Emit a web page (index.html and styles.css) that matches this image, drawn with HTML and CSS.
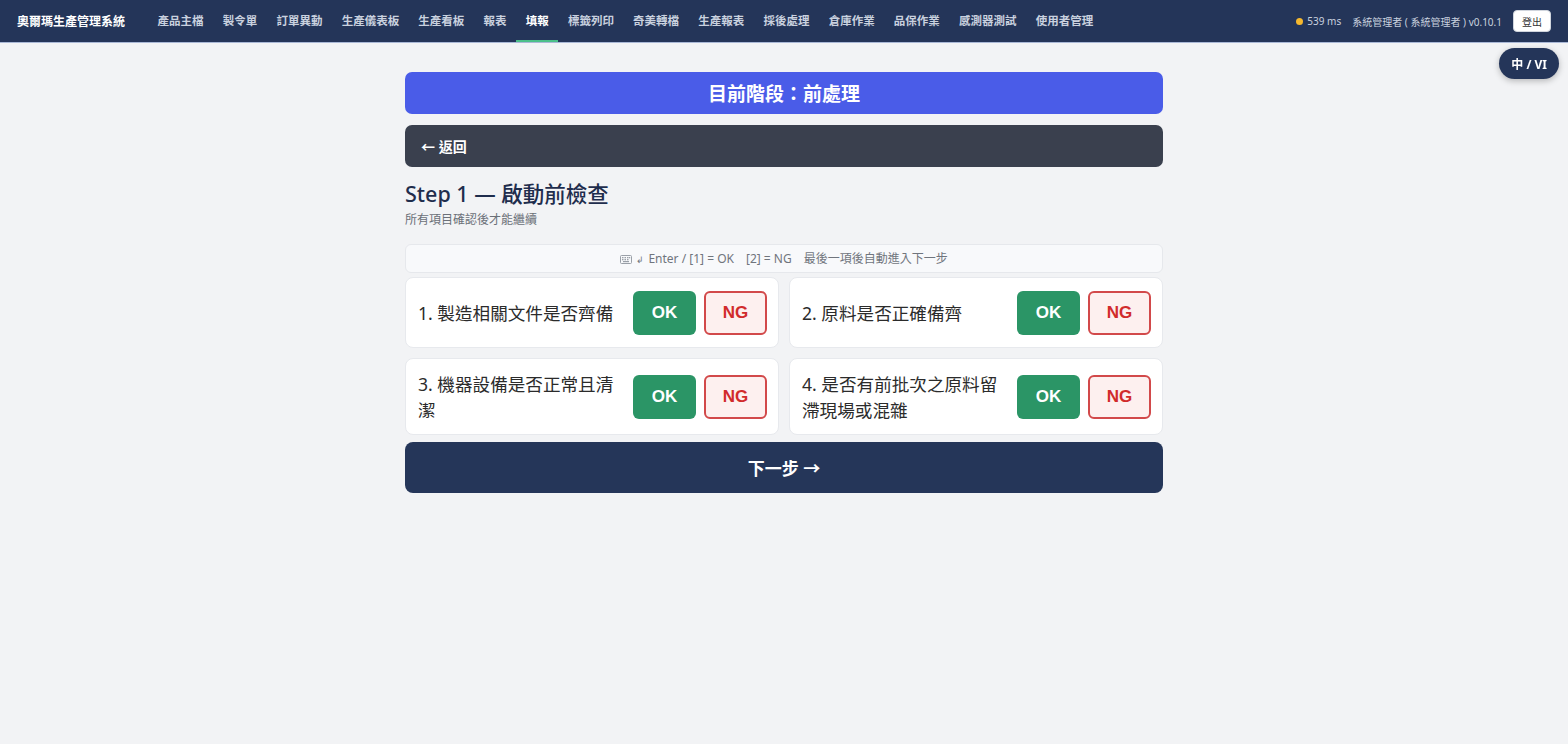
FILE: index.html
```html
<!DOCTYPE html>
<html lang="zh-Hant">
<head>
    <meta charset="UTF-8">
    <meta name="viewport" content="width=device-width, initial-scale=1.0">
    <title>奧爾瑪生產管理系統 - 填報</title>
    <link rel="stylesheet" href="styles.css">
</head>
<body>
    <!-- Top Navigation -->
    <header class="topbar">
        <div class="brand">奧爾瑪生產管理系統</div>
        <nav class="nav">
            <a href="#">產品主檔</a>
            <a href="#">製令單</a>
            <a href="#">訂單異動</a>
            <a href="#">生產儀表板</a>
            <a href="#">生產看板</a>
            <a href="#">報表</a>
            <a href="#" class="active">填報</a>
            <a href="#">標籤列印</a>
            <a href="#">奇美轉檔</a>
            <a href="#">生產報表</a>
            <a href="#">採後處理</a>
            <a href="#">倉庫作業</a>
            <a href="#">品保作業</a>
            <a href="#">感測器測試</a>
            <a href="#">使用者管理</a>
        </nav>
        <div class="status">
            <span class="dot"></span>
            <span class="latency">539 ms</span>
            <span class="user">系統管理者 ( 系統管理者 ) v0.10.1</span>
            <button class="logout">登出</button>
        </div>
    </header>

    <button class="lang-toggle">中 / VI</button>

    <!-- Main Content -->
    <main class="container">
        <div class="stage-banner">目前階段：前處理</div>
        <button class="back-bar">← 返回</button>

        <h2 class="step-title">Step 1 — 啟動前檢查</h2>
        <p class="step-sub">所有項目確認後才能繼續</p>

        <div class="hint">
            <svg class="kbd-icon" width="12" height="9" viewBox="0 0 12 9">
                <rect x="0.5" y="0.5" width="11" height="8" rx="1" fill="none" stroke="#9aa0a8"/>
                <rect x="2" y="2" width="1.5" height="1.3" fill="#9aa0a8"/>
                <rect x="4.5" y="2" width="1.5" height="1.3" fill="#9aa0a8"/>
                <rect x="7" y="2" width="1.5" height="1.3" fill="#9aa0a8"/>
                <rect x="9" y="2" width="1.2" height="1.3" fill="#9aa0a8"/>
                <rect x="2" y="4" width="1.5" height="1.3" fill="#9aa0a8"/>
                <rect x="4.5" y="4" width="1.5" height="1.3" fill="#9aa0a8"/>
                <rect x="7" y="4" width="1.5" height="1.3" fill="#9aa0a8"/>
                <rect x="3" y="6" width="6" height="1.2" fill="#9aa0a8"/>
            </svg><span class="enter">↲</span> Enter / [1] = OK<span class="sp"></span>[2] = NG<span class="sp"></span>最後一項後自動進入下一步
        </div>

        <div class="checklist">
            <div class="check-card">
                <div class="check-text">1. 製造相關文件是否齊備</div>
                <div class="check-btns">
                    <button class="btn-ok">OK</button>
                    <button class="btn-ng">NG</button>
                </div>
            </div>
            <div class="check-card">
                <div class="check-text">2. 原料是否正確備齊</div>
                <div class="check-btns">
                    <button class="btn-ok">OK</button>
                    <button class="btn-ng">NG</button>
                </div>
            </div>
            <div class="check-card">
                <div class="check-text">3. 機器設備是否正常且清潔</div>
                <div class="check-btns">
                    <button class="btn-ok">OK</button>
                    <button class="btn-ng">NG</button>
                </div>
            </div>
            <div class="check-card">
                <div class="check-text">4. 是否有前批次之原料留滯現場或混雜</div>
                <div class="check-btns">
                    <button class="btn-ok">OK</button>
                    <button class="btn-ng">NG</button>
                </div>
            </div>
        </div>

        <button class="next-btn">下一步 →</button>
    </main>
</body>
</html>
```

FILE: styles.css
```css
* {
    margin: 0;
    padding: 0;
    box-sizing: border-box;
}

body {
    font-family: "Noto Sans", "Noto Sans CJK TC", sans-serif;
    background-color: #f2f3f5;
    color: #2b2b2b;
}

button {
    font-family: inherit;
    cursor: pointer;
}

/* Header */
.topbar {
    height: 43px;
    background-color: #243559;
    border-bottom: 1px solid #aab8d6;
    display: flex;
    align-items: center;
    padding: 0 17px;
}

.brand {
    color: #ffffff;
    font-weight: 700;
    font-size: 12px;
    margin-right: 23px;
}

.nav {
    display: flex;
    height: 100%;
}

.nav a {
    display: flex;
    align-items: center;
    padding: 0 9.6px;
    color: #c9d1df;
    text-decoration: none;
    font-size: 11.5px;
    font-weight: 700;
    border-bottom: 2px solid transparent;
}

.nav a.active {
    color: #ffffff;
    border-bottom-color: #4cc08a;
}

.status {
    margin-left: auto;
    display: flex;
    align-items: center;
    color: #c9d1df;
    font-size: 10px;
}

.dot {
    width: 7px;
    height: 7px;
    border-radius: 50%;
    background-color: #f5b82e;
    margin-right: 4px;
}

.latency {
    margin-right: 11px;
}

.logout {
    margin-left: 11px;
    height: 22px;
    background: #ffffff;
    color: #333;
    border: 1px solid #d0d5dd;
    border-radius: 4px;
    font-size: 10px;
    padding: 0 8px;
}

/* Language toggle */
.lang-toggle {
    position: fixed;
    top: 48px;
    right: 9px;
    height: 31px;
    padding: 0 12px;
    border: none;
    border-radius: 16px;
    background-color: #243559;
    color: #ffffff;
    font-weight: 700;
    font-size: 12px;
    box-shadow: 0 2px 6px rgba(0, 0, 0, 0.25);
}

/* Main Container */
.container {
    width: 758px;
    margin: 29px auto 0;
}

.stage-banner {
    height: 42px;
    background-color: #4a5ce8;
    color: #ffffff;
    border-radius: 7px;
    display: flex;
    align-items: center;
    justify-content: center;
    font-size: 19px;
    font-weight: 700;
}

.back-bar {
    display: flex;
    align-items: center;
    width: 100%;
    height: 42px;
    margin-top: 11px;
    padding: 0 16px;
    background-color: #3a404e;
    color: #ffffff;
    border: none;
    border-radius: 7px;
    font-size: 14px;
    font-weight: 700;
}

.step-title {
    margin-top: 12px;
    font-size: 21.5px;
    font-weight: 500;
    color: #1f2d4d;
    line-height: 30px;
}

.step-sub {
    margin-top: 3px;
    font-size: 12px;
    color: #6b7078;
    line-height: 16px;
}

.hint {
    margin-top: 16px;
    height: 29px;
    line-height: 27px;
    background-color: #f8f9fb;
    border: 1px solid #e6e8ec;
    border-radius: 6px;
    text-align: center;
    font-size: 12px;
    color: #70757d;
}

.kbd-icon {
    margin-right: 4px;
    vertical-align: -1px;
}

.enter {
    font-size: 9px;
    margin-right: 1px;
}

.sp {
    display: inline-block;
    width: 12px;
}

/* Checklist */
.checklist {
    margin-top: 4px;
    display: grid;
    grid-template-columns: 1fr 1fr;
    gap: 10px;
}

.check-card {
    min-height: 71px;
    background-color: #ffffff;
    border: 1px solid #e7e9ed;
    border-radius: 8px;
    padding: 12px 11px 11px 12px;
    display: flex;
    align-items: center;
    gap: 16px;
}

.check-text {
    flex: 1;
    font-size: 17.6px;
    line-height: 26px;
    color: #2b2b2b;
}

.check-btns {
    display: flex;
    gap: 8px;
}

.btn-ok,
.btn-ng {
    width: 63px;
    height: 44px;
    border-radius: 6px;
    font-family: "Liberation Sans", Arial, sans-serif;
    font-size: 17px;
    font-weight: 700;
}

.btn-ok {
    background-color: #2b9566;
    color: #ffffff;
    border: none;
}

.btn-ng {
    background-color: #fdf0ef;
    color: #d12b2b;
    border: 2px solid #d2494a;
}

.next-btn {
    display: block;
    width: 100%;
    height: 51px;
    margin-top: 7px;
    background-color: #253659;
    color: #ffffff;
    border: none;
    border-radius: 8px;
    font-size: 17px;
    font-weight: 700;
}
```
